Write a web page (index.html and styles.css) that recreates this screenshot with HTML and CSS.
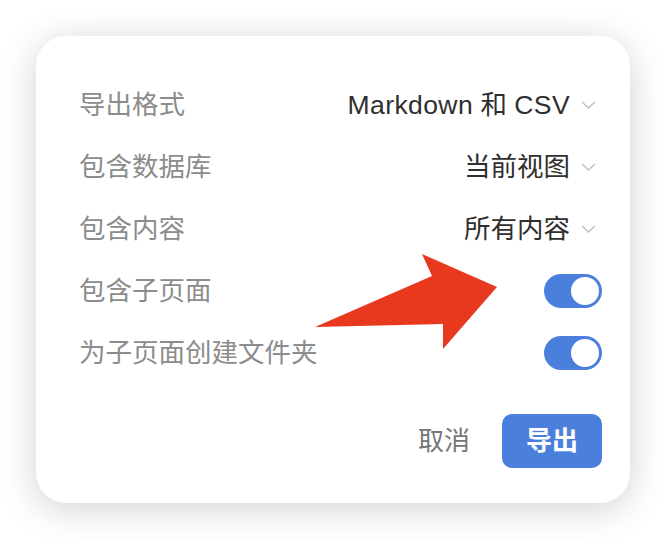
FILE: index.html
```html
<!DOCTYPE html>
<html lang="zh">
<head>
<meta charset="utf-8">
<link rel="stylesheet" href="styles.css">
</head>
<body>
<div class="dialog">
  <div class="rows">
    <div class="row">
      <span class="label">导出格式</span>
      <span class="value"><span class="text"><span class="latin">Markdown</span> 和 <span class="latin">CSV</span></span><svg class="chev" viewBox="0 0 15 8"><path d="M1 1 L7.5 7 L14 1"/></svg></span>
    </div>
    <div class="row">
      <span class="label">包含数据库</span>
      <span class="value"><span class="text">当前视图</span><svg class="chev" viewBox="0 0 15 8"><path d="M1 1 L7.5 7 L14 1"/></svg></span>
    </div>
    <div class="row">
      <span class="label">包含内容</span>
      <span class="value"><span class="text">所有内容</span><svg class="chev" viewBox="0 0 15 8"><path d="M1 1 L7.5 7 L14 1"/></svg></span>
    </div>
    <div class="row">
      <span class="label">包含子页面</span>
      <span class="toggle"><span class="knob"></span></span>
    </div>
    <div class="row">
      <span class="label">为子页面创建文件夹</span>
      <span class="toggle"><span class="knob"></span></span>
    </div>
  </div>
  <div class="actions">
    <button class="btn-cancel">取消</button>
    <button class="btn-primary">导出</button>
  </div>
</div>
<svg class="arrow" width="666" height="540" viewBox="0 0 666 540">
  <polygon points="315,327 432,276 422,254 497,287 443,349 443,324" fill="#e8391f"/>
</svg>
</body>
</html>
```
FILE: styles.css
```css
html, body {
  margin: 0;
  padding: 0;
  background: #ffffff;
}
body {
  width: 666px;
  height: 540px;
  overflow: hidden;
  font-family: "Liberation Sans", "Noto Sans CJK SC", sans-serif;
  padding: 36px;
  box-sizing: border-box;
}
.dialog {
  width: 594px;
  height: 467px;
  box-sizing: border-box;
  background: #fff;
  border-radius: 30px;
  box-shadow: 0 6px 36px rgba(0, 0, 0, 0.18);
  padding: 38px 28px 36px 43px;
  display: flex;
  flex-direction: column;
}
.rows {
  display: flex;
  flex-direction: column;
}
.row {
  height: 62px;
  display: flex;
  align-items: center;
  justify-content: space-between;
}
.label {
  font-size: 26.5px;
  color: #8c8c8c;
  line-height: 1;
}
.value {
  display: flex;
  align-items: center;
  gap: 11px;
  margin-right: 6px;
}
.text {
  font-size: 26.5px;
  color: #2f2f2f;
  line-height: 1;
}
.latin {
  letter-spacing: 0.4px;
}
.chev {
  width: 15px;
  height: 8px;
  fill: none;
  stroke: #c2c2c2;
  stroke-width: 1.6;
}
.toggle {
  width: 58px;
  height: 34px;
  border-radius: 17px;
  background: #4a7fdb;
  display: flex;
  align-items: center;
  justify-content: flex-end;
  padding: 0 3px;
  box-sizing: border-box;
}
.knob {
  width: 28px;
  height: 28px;
  border-radius: 50%;
  background: #fff;
}
.actions {
  margin-top: 30px;
  display: flex;
  justify-content: flex-end;
  align-items: center;
  gap: 32px;
}
button {
  font-family: "Liberation Sans", "Noto Sans CJK SC", sans-serif;
  border: none;
  font-size: 26px;
  line-height: 1;
  cursor: pointer;
}
.btn-cancel {
  background: none;
  color: #767676;
  padding: 0;
}
.btn-primary {
  width: 100px;
  height: 54px;
  border-radius: 10px;
  background: #4a80dc;
  color: #fff;
  font-weight: 600;
  padding: 0;
}
.arrow {
  position: absolute;
  left: 0;
  top: 0;
  pointer-events: none;
}
```
